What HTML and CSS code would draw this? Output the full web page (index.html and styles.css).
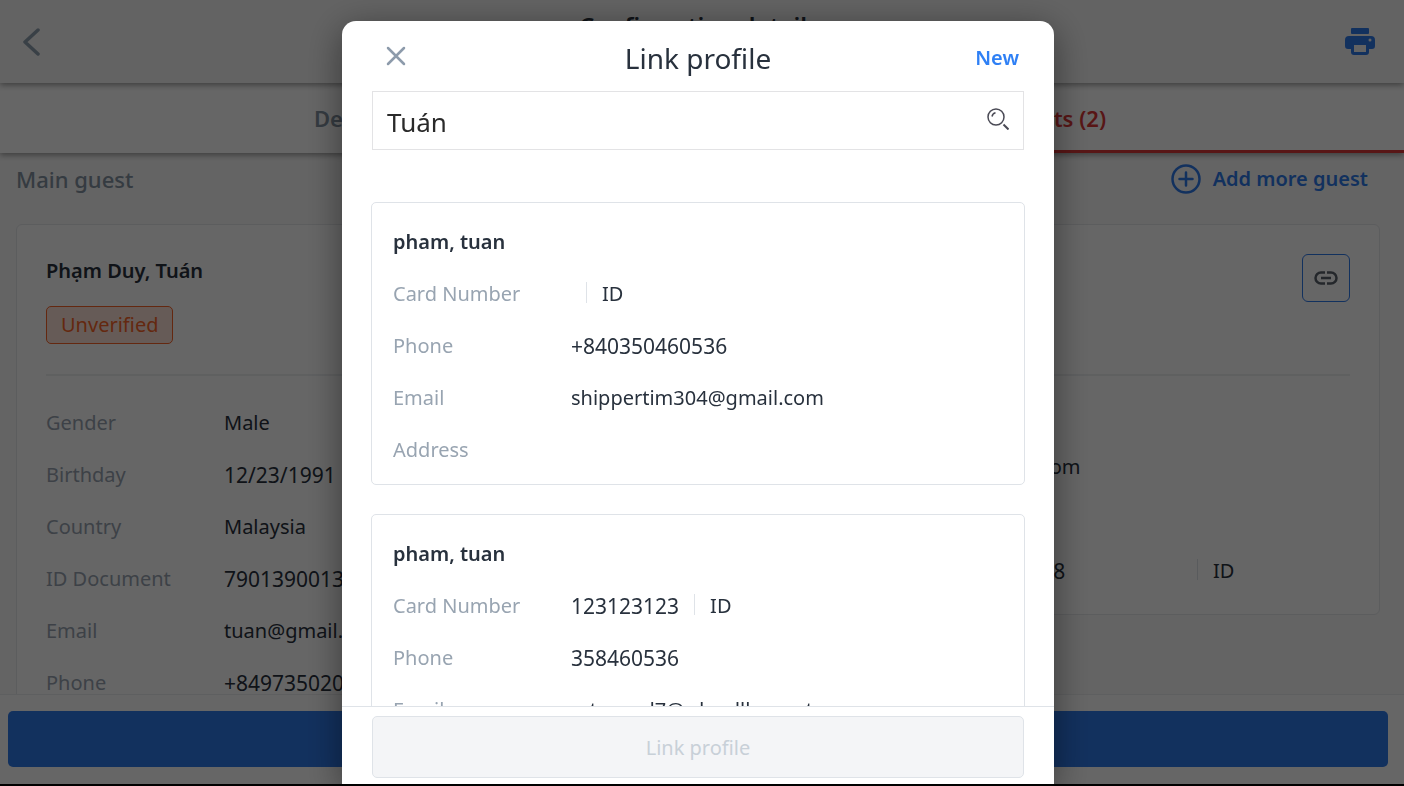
FILE: index.html
```html
<!DOCTYPE html>
<html lang="en">
<head>
    <meta charset="UTF-8">
    <meta name="viewport" content="width=device-width, initial-scale=1.0">
    <title>Link profile</title>
    <link rel="stylesheet" href="styles.css">
</head>
<body>
    <div class="app">
        <header class="topbar">
            <button class="icon-btn" aria-label="Back">
                <svg width="18" height="30" viewBox="0 0 18 30" fill="none" stroke="#90a0b0" stroke-width="3.500" stroke-linecap="round" stroke-linejoin="round"><path d="M15 3 2 15l13 12"/></svg>
            </button>
            <h1 class="topbar-title">Confirmation details</h1>
            <button class="icon-btn" aria-label="Print">
                <svg width="30" height="28" viewBox="0 0 30 28" fill="#2f7aeb"><rect x="6" y="0" width="18" height="6" rx="1"/><path fill-rule="evenodd" d="M4 8h22a4 4 0 0 1 4 4v6a3 3 0 0 1-3 3h-3v3a3 3 0 0 1-3 3H9a3 3 0 0 1-3-3v-3H3a3 3 0 0 1-3-3v-6a4 4 0 0 1 4-4zm5 9v7h12v-7zm16-6.500a1.500 1.500 0 1 0 0 3 1.500 1.500 0 0 0 0-3z"/></svg>
            </button>
        </header>

        <nav class="tabs">
            <a class="tab" href="#details">Details</a>
            <a class="tab active" href="#guests">Guests (2)</a>
        </nav>

        <main class="content">
            <div class="content-head">
                <h2 class="content-title">Main guest</h2>
                <button class="add-guest">
                    <svg width="30" height="30" viewBox="0 0 30 30" fill="none" stroke="#2f7aeb" stroke-width="2.500" stroke-linecap="round"><circle cx="15" cy="15" r="13.500"/><path d="M15 8.500v13M8.500 15h13"/></svg>
                    Add more guest
                </button>
            </div>
            <div class="guests">
                <section class="guest">
                    <div class="guest-head">
                        <div>
                            <h3 class="name">Phạm Duy, Tuán</h3>
                            <span class="badge">Unverified</span>
                        </div>
                    </div>
                    <dl class="rows rows-main">
                        <div class="row"><dt>Gender</dt><dd>Male</dd></div>
                        <div class="row"><dt>Birthday</dt><dd class="num">12/23/1991</dd></div>
                        <div class="row"><dt>Country</dt><dd>Malaysia</dd></div>
                        <div class="row"><dt>ID Document</dt><dd class="num">790139001352</dd></div>
                        <div class="row"><dt>Email</dt><dd>tuan@gmail.com</dd></div>
                        <div class="row"><dt>Phone</dt><dd class="num">+84973502018</dd></div>
                    </dl>
                </section>
                <section class="guest">
                    <div class="guest-head">
                        <h3 class="name">pham, tuan</h3>
                        <button class="link-btn" aria-label="Link profile">
                            <svg width="24" height="14" viewBox="0 0 24 14" fill="none" stroke="#5a626c" stroke-width="2.500"><path d="M11 1.500H7a5.500 5.500 0 0 0 0 11h4M13 1.500h4a5.500 5.500 0 0 1 0 11h-4M7 7h10"/></svg>
                        </button>
                    </div>
                    <dl class="rows">
                        <div class="row"><dt>Gender</dt><dd>Male</dd></div>
                        <div class="row"><dt>Email</dt><dd>tuan@gmail.com</dd></div>
                        <div class="row"><dt>Phone</dt><dd class="num">+8435046</dd></div>
                        <div class="row"><dt>Card Number</dt><dd class="num card-number">079013900138</dd><dd class="kind">ID</dd></div>
                    </dl>
                </section>
            </div>
        </main>

        <footer class="bottombar">
            <button class="primary-btn" aria-label="Save"></button>
        </footer>
    </div>

    <div class="overlay">
        <div class="modal" role="dialog" aria-labelledby="modal-title">
            <div class="modal-head">
                <button class="close-btn" aria-label="Close">
                    <svg width="20" height="20" viewBox="0 0 20 20" fill="none" stroke="#8d9bab" stroke-width="2.500" stroke-linecap="round"><path d="M2 2l16 16M18 2 2 18"/></svg>
                </button>
                <h2 class="modal-title" id="modal-title">Link profile</h2>
                <button class="new-btn">New</button>
            </div>
            <div class="search">
                <input class="search-input" type="text" value="Tuán" aria-label="Search profile">
                <svg width="22" height="22" viewBox="0 0 22 22" fill="none" stroke="#4a4a55"><circle cx="9" cy="9" r="8" stroke-width="1.500"/><path d="M5 8.500c.4-2 1.500-3.200 3.500-3.700" stroke-width="1.500"/><path d="m16.500 16.500 5 5" stroke-width="2"/></svg>
            </div>
            <div class="results">
                <article class="profile">
                    <h3 class="name">pham, tuan</h3>
                    <dl class="rows">
                        <div class="row"><dt>Card Number</dt><dd></dd><dd class="kind">ID</dd></div>
                        <div class="row"><dt>Phone</dt><dd class="num">+840350460536</dd></div>
                        <div class="row"><dt>Email</dt><dd>shippertim304@gmail.com</dd></div>
                        <div class="row"><dt>Address</dt><dd></dd></div>
                    </dl>
                </article>
                <article class="profile">
                    <h3 class="name">pham, tuan</h3>
                    <dl class="rows">
                        <div class="row"><dt>Card Number</dt><dd class="num">123123123</dd><dd class="kind">ID</dd></div>
                        <div class="row"><dt>Phone</dt><dd class="num">358460536</dd></div>
                        <div class="row"><dt>Email</dt><dd>mtuansd7@rdoedllc.comt</dd></div>
                        <div class="row"><dt>Address</dt><dd></dd></div>
                    </dl>
                </article>
            </div>
            <div class="modal-foot">
                <button class="submit-btn" disabled>Link profile</button>
            </div>
        </div>
    </div>
</body>
</html>
```
FILE: styles.css
```css
:root {
    --color-text: #28313d;
    --color-muted: #98a4b1;
    --color-border: #dfe3e8;
    --color-blue: #2f7aeb;
    --color-red: #dc3838;
    --color-orange: #fa6428;
}

* {
    box-sizing: border-box;
}

body {
    margin: 0;
    background: #000000;
    color: var(--color-text);
    font-family: "Noto Sans", sans-serif;
    font-size: 20px;
    line-height: 28px;
}

h1, h2, h3, dl, dd {
    margin: 0;
}

button {
    padding: 0;
    border: none;
    background: none;
    font: inherit;
    cursor: pointer;
}

svg {
    display: block;
    flex: none;
}

.app {
    display: flex;
    flex-direction: column;
    height: calc(100vh - 2px);
    background: #fafafa;
}

.topbar {
    display: grid;
    grid-template-columns: 1fr auto 1fr;
    align-items: center;
    flex: none;
    height: 83px;
    padding: 0 29px 0 23px;
    background: #f7f7f7;
    box-shadow: 0 2px 6px rgba(0, 0, 0, 0.4);
    z-index: 2;
}

.icon-btn {
    justify-self: start;
}

.icon-btn:last-child {
    justify-self: end;
}

.topbar-title {
    padding-bottom: 32px;
    font-size: 24px;
    font-weight: 600;
}

.tabs {
    display: flex;
    flex: none;
    height: 70px;
    background: #ffffff;
    box-shadow: 0 2px 6px rgba(0, 0, 0, 0.4);
    z-index: 1;
}

.tab {
    flex: 1;
    padding-top: 21px;
    color: #8594a3;
    font-size: 22px;
    font-weight: 600;
    text-align: center;
    text-decoration: none;
}

.tab.active {
    border-bottom: 3px solid var(--color-red);
    color: var(--color-red);
}

.content {
    flex: 1;
    min-height: 0;
    overflow: hidden;
    padding: 8px 24px 0 16px;
}

.content-head {
    display: flex;
    align-items: center;
    justify-content: space-between;
    height: 36px;
    margin-bottom: 27px;
    padding-right: 12px;
}

.content-title {
    color: #8594a3;
    font-size: 22px;
    font-weight: 500;
}

.add-guest {
    display: flex;
    align-items: center;
    gap: 12px;
    color: var(--color-blue);
    font-weight: 600;
}

.guests {
    display: flex;
    align-items: flex-start;
    gap: 30px;
}

.guest {
    flex: 1;
    padding: 29px 29px 17px;
    border: 1px solid #e6e8eb;
    border-radius: 6px;
    background: #ffffff;
}

.guest-head {
    display: flex;
    align-items: flex-start;
    justify-content: space-between;
    height: 122px;
    border-bottom: 2px solid #edeff1;
}

.name {
    font-size: 20px;
    font-weight: 600;
}

.guest .name {
    padding-top: 3px;
}

.badge {
    display: inline-block;
    margin-top: 21px;
    padding: 4px 14px;
    border: 1px solid var(--color-orange);
    border-radius: 5px;
    background: #ffe4da;
    color: var(--color-orange);
}

.link-btn {
    display: flex;
    align-items: center;
    justify-content: center;
    width: 48px;
    height: 48px;
    border: 1px solid var(--color-blue);
    border-radius: 6px;
}

.guest .rows {
    padding-top: 13px;
}

.guest .rows-main {
    padding-top: 21px;
}

.row {
    display: flex;
    align-items: center;
    height: 52px;
    white-space: nowrap;
}

.row dt {
    flex: none;
    width: 178px;
    color: var(--color-muted);
}

.num {
    font-size: 21px;
}

.kind {
    position: relative;
    margin-left: 15px;
    padding-left: 16px;
}

.kind::before {
    content: "";
    position: absolute;
    top: 2px;
    left: 0;
    width: 1px;
    height: 21px;
    background: var(--color-border);
}

.card-number {
    width: 261px;
}

.bottombar {
    flex: none;
    padding: 16px 16px 17px 8px;
    border-top: 1px solid #eceef0;
    background: #ffffff;
}

.primary-btn {
    display: block;
    width: 100%;
    height: 56px;
    border-radius: 5px;
    background: var(--color-blue);
}

.overlay {
    position: fixed;
    inset: 0 0 2px;
    z-index: 10;
    display: flex;
    justify-content: center;
    overflow: hidden;
    padding: 21px 8px 0 0;
    background: rgba(0, 0, 0, 0.6);
}

.modal {
    display: flex;
    flex-direction: column;
    width: 100%;
    max-width: 712px;
    border-radius: 14px 14px 0 0;
    background: #ffffff;
    box-shadow: 0 8px 36px rgba(0, 0, 0, 0.45);
}

.modal-head {
    display: grid;
    grid-template-columns: 1fr auto 1fr;
    align-items: center;
    flex: none;
    height: 70px;
    padding: 4px 35px 0;
}

.close-btn {
    justify-self: start;
    padding: 0 9px 4px;
}

.modal-title {
    font-size: 28px;
    font-weight: 400;
}

.new-btn {
    justify-self: end;
    color: #2f80f5;
    font-weight: 600;
}

.search {
    display: flex;
    align-items: center;
    flex: none;
    height: 59px;
    margin: 0 30px;
    padding: 0 14px 3px 0;
    border: 1px solid #e3e3e5;
}

.search-input {
    flex: 1;
    min-width: 0;
    padding: 6px 14px 0;
    border: none;
    outline: none;
    background: none;
    color: #2a2a2a;
    font: inherit;
    font-size: 26px;
}

.results {
    flex: 1;
    min-height: 0;
    overflow: hidden;
    padding: 52px 29px 0;
}

.profile {
    margin-bottom: 29px;
    padding: 25px 21px 20px;
    border: 1px solid var(--color-border);
    border-radius: 5px;
}

.profile .rows {
    padding-top: 12px;
    margin-bottom: -12px;
}

.modal-foot {
    flex: none;
    padding: 9px 30px 6px;
    border-top: 1px solid var(--color-border);
}

.submit-btn {
    display: block;
    width: 100%;
    height: 62px;
    padding-top: 2px;
    border: 1px solid var(--color-border);
    border-radius: 5px;
    background: #f4f5f7;
    color: #c8d0d8;
}
```
